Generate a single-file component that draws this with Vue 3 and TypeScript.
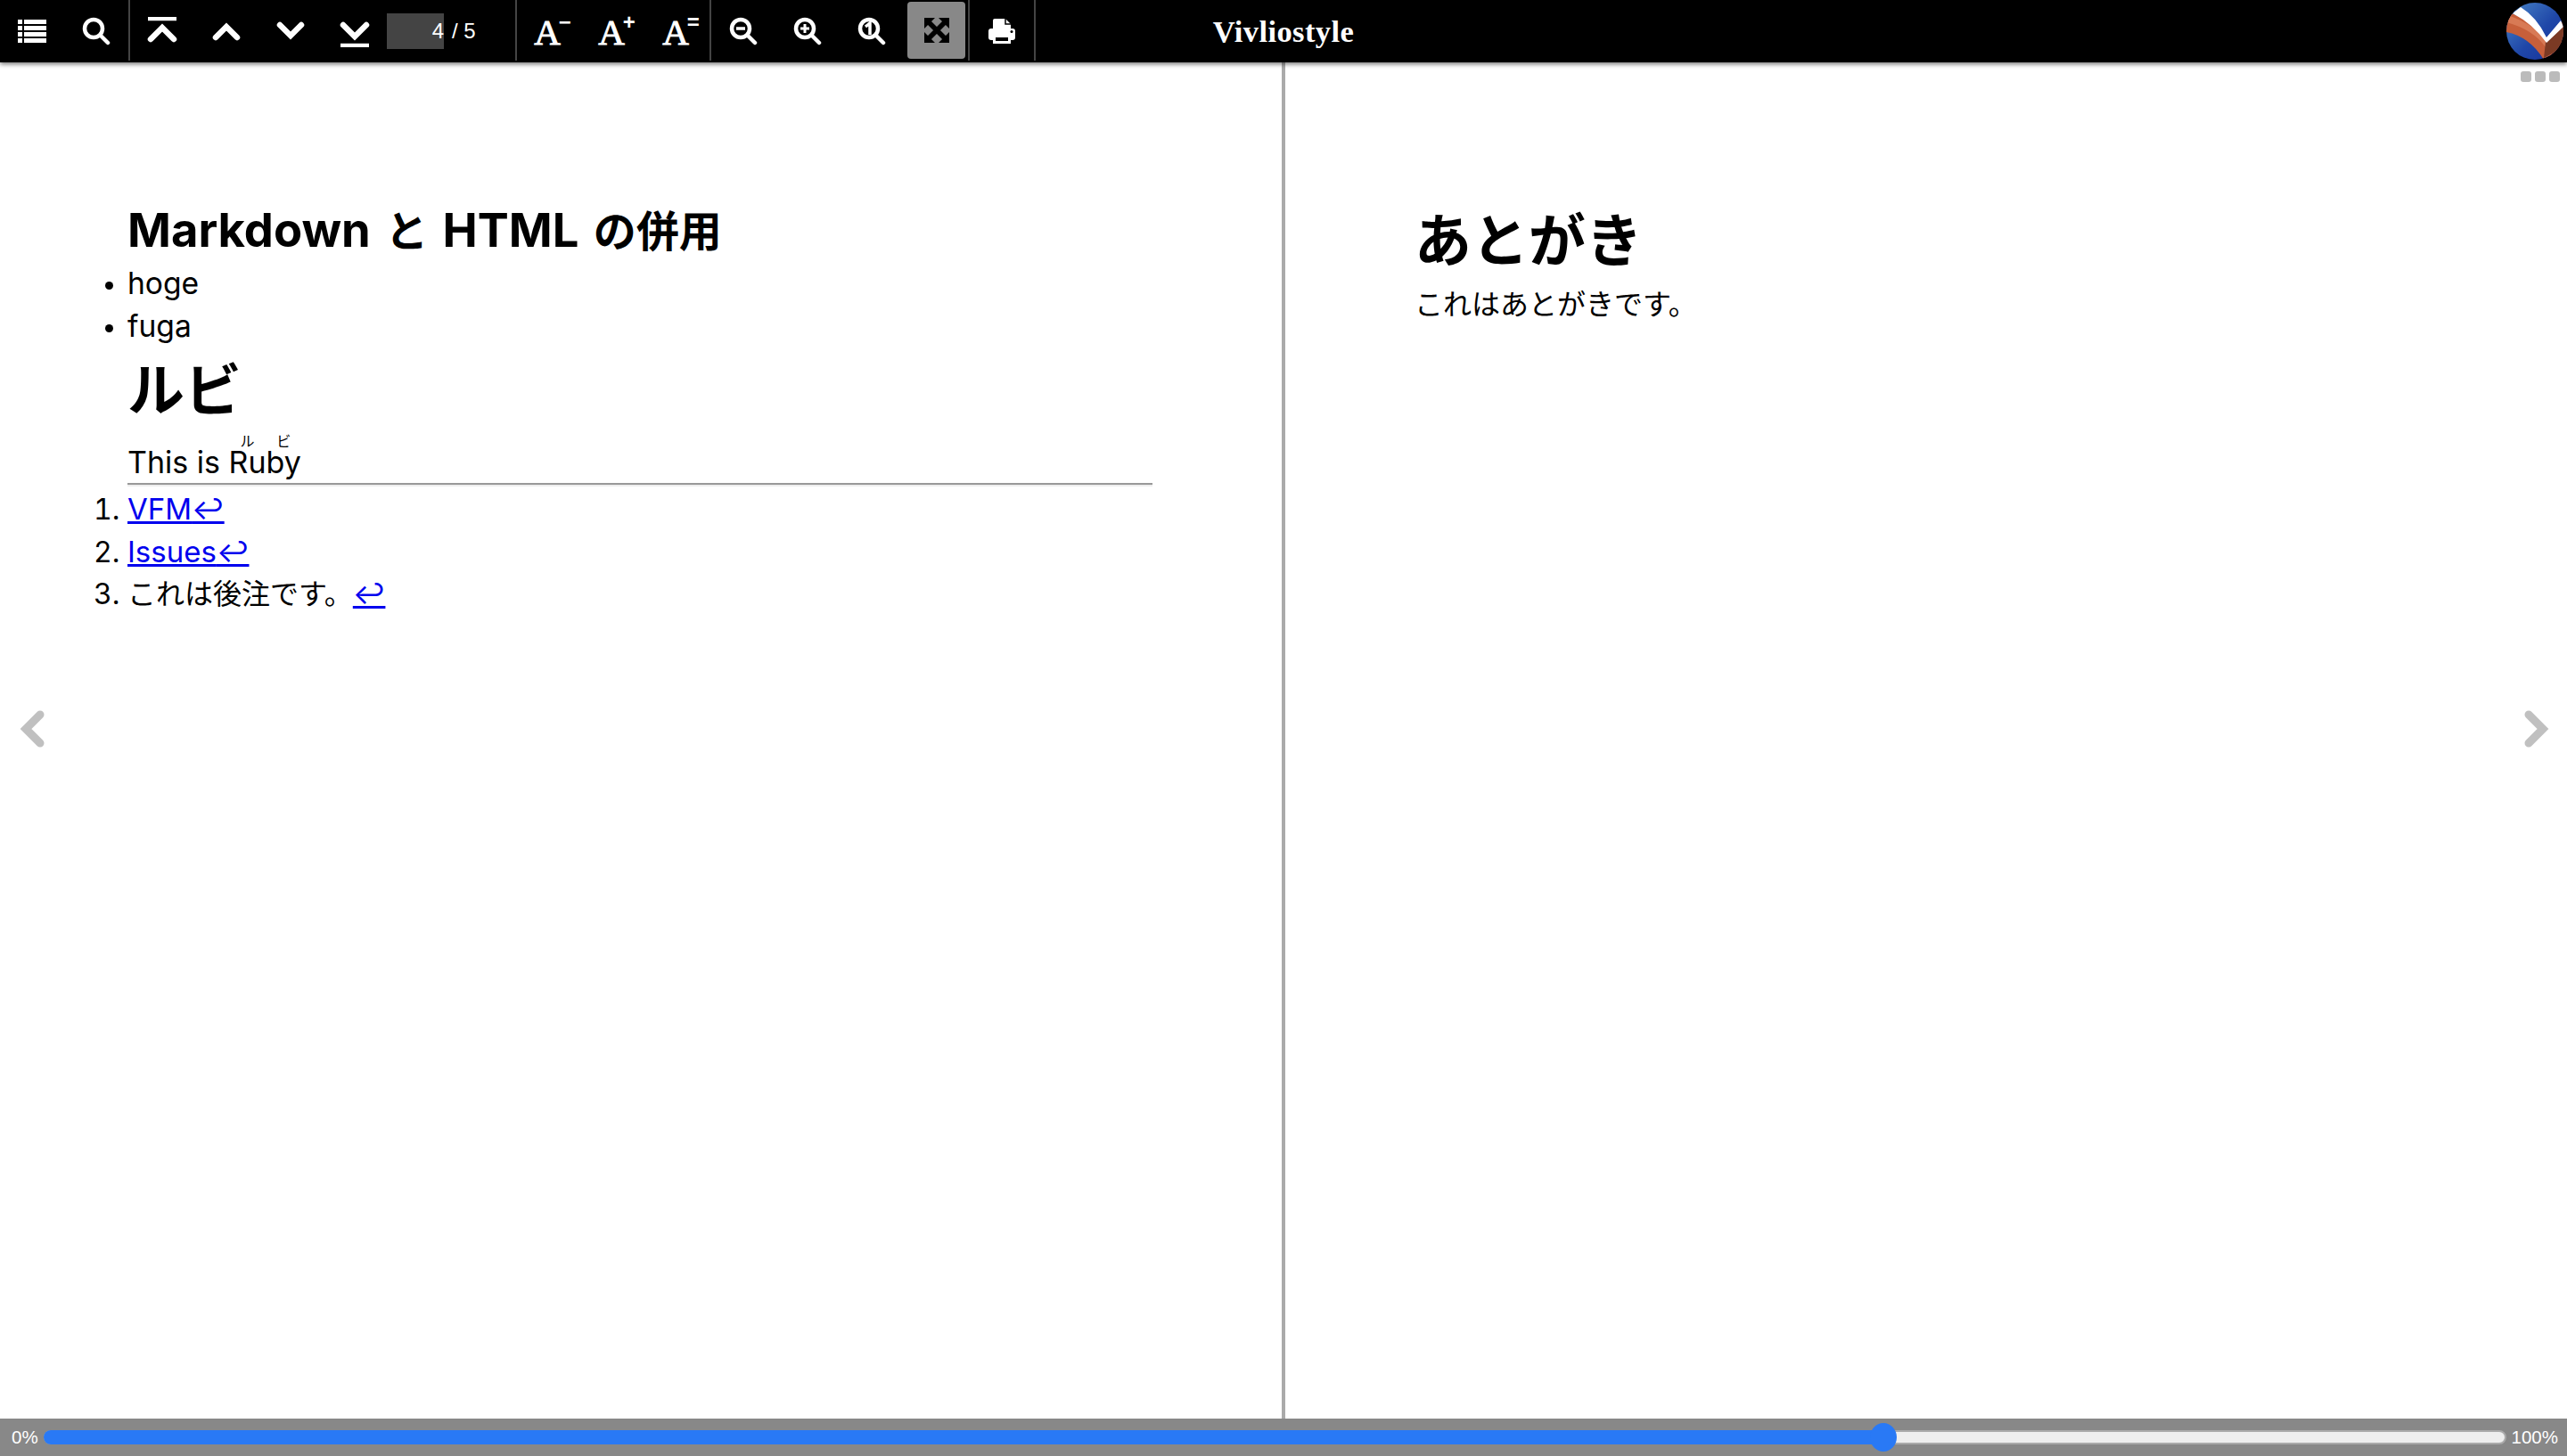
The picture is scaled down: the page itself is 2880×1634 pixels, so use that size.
<script setup lang="ts">
const sliderPercent = 74.75
</script>

<template>
  <div class="viewer">
    <header class="toolbar">
      <nav class="tools">
        <button class="tool">
          <svg width="32" height="28" viewBox="0 0 32 28" fill="#fff">
            <rect x="0" y="1" width="5" height="5" /><rect x="7" y="1" width="25" height="5" />
            <rect x="0" y="8" width="5" height="5" /><rect x="7" y="8" width="25" height="5" />
            <rect x="0" y="15" width="5" height="5" /><rect x="7" y="15" width="25" height="5" />
            <rect x="0" y="22" width="5" height="5" /><rect x="7" y="22" width="25" height="5" />
          </svg>
        </button>
        <button class="tool">
          <svg width="32" height="32" viewBox="0 0 32 32" fill="none" stroke="#fff" stroke-width="4.5" stroke-linecap="round">
            <circle cx="13" cy="13" r="10" /><path d="M21 21 L29 29" />
          </svg>
        </button>
        <i class="sep"></i>
        <button class="tool">
          <svg width="34" height="32" viewBox="0 0 34 32" fill="none" stroke="#fff">
            <path d="M1 2 H33" stroke-width="4.5" />
            <path d="M4 25 L17 12 L30 25" stroke-width="6.5" stroke-linecap="round" />
          </svg>
        </button>
        <button class="tool">
          <svg width="34" height="24" viewBox="0 0 34 24" fill="none" stroke="#fff" stroke-width="6.5" stroke-linecap="round">
            <path d="M5 19 L17 7 L29 19" />
          </svg>
        </button>
        <button class="tool">
          <svg width="34" height="24" viewBox="0 0 34 24" fill="none" stroke="#fff" stroke-width="6.5" stroke-linecap="round">
            <path d="M5 5 L17 17 L29 5" />
          </svg>
        </button>
        <button class="tool">
          <svg class="nudge-down" width="34" height="32" viewBox="0 0 34 32" fill="none" stroke="#fff">
            <path d="M4 7 L17 20 L30 7" stroke-width="6.5" stroke-linecap="round" />
            <path d="M1 30 H33" stroke-width="4.5" />
          </svg>
        </button>
        <div class="pager">
          <span class="page-input">4</span>
          <span class="page-total">/ 5</span>
        </div>
        <i class="sep"></i>
        <button class="tool font-tool"><span class="big-a">A</span><span class="font-mark">−</span></button>
        <button class="tool font-tool"><span class="big-a">A</span><span class="font-mark">+</span></button>
        <button class="tool font-tool"><span class="big-a">A</span><span class="font-mark">=</span></button>
        <i class="sep"></i>
        <button class="tool">
          <svg width="32" height="32" viewBox="0 0 32 32" fill="none" stroke="#fff" stroke-width="4.5" stroke-linecap="round">
            <circle cx="13" cy="13" r="10" /><path d="M21 21 L29 29" /><path d="M8 13 H18" stroke-width="3.5" stroke-linecap="butt" />
          </svg>
        </button>
        <button class="tool">
          <svg width="32" height="32" viewBox="0 0 32 32" fill="none" stroke="#fff" stroke-width="4.5" stroke-linecap="round">
            <circle cx="13" cy="13" r="10" /><path d="M21 21 L29 29" /><path d="M8 13 H18 M13 8 V18" stroke-width="3" stroke-linecap="butt" />
          </svg>
        </button>
        <button class="tool">
          <svg width="32" height="32" viewBox="0 0 32 32" fill="none" stroke="#fff" stroke-width="4.5" stroke-linecap="round">
            <circle cx="13" cy="13" r="10" /><path d="M21 21 L29 29" /><path d="M9 11 L14 7 V20" stroke-width="3.5" stroke-linecap="butt" />
          </svg>
        </button>
        <button class="tool tool-active">
          <svg width="28" height="28" viewBox="0 0 28 28" fill="#000" stroke="#000">
            <path d="M0 0 H12 L0 12 Z M28 0 V12 L16 0 Z M0 28 V16 L12 28 Z M28 28 H16 L28 16 Z" stroke="none" />
            <path d="M5 5 L23 23 M23 5 L5 23" stroke-width="5.5" fill="none" />
          </svg>
        </button>
        <i class="sep"></i>
        <button class="tool">
          <svg width="30" height="28" viewBox="0 0 30 28">
            <path d="M5 13 V2 Q5 0 7 0 H19 L25 6 V13 Z" fill="#fff" />
            <path d="M19 0 V6 H25" fill="none" stroke="#000" stroke-width="1.5" />
            <path d="M3 11 H27 Q30 11 30 14 V21 Q30 24 27 24 H3 Q0 24 0 21 V14 Q0 11 3 11 Z" fill="#fff" />
            <circle cx="26" cy="14.500" r="1.500" fill="#000" />
            <rect x="6.500" y="19.500" width="17" height="7" fill="#000" stroke="#fff" stroke-width="3" />
          </svg>
        </button>
        <i class="sep"></i>
      </nav>
      <h1 class="brand">Vivliostyle</h1>
      <div class="logo-slot">
        <svg class="logo" width="64" height="64" viewBox="0 0 64 64">
          <defs>
            <clipPath id="logo-clip"><circle cx="32" cy="32" r="32" /></clipPath>
            <linearGradient id="logo-blue" x1="0" y1="0" x2="1" y2="1">
              <stop offset="0" stop-color="#4a86c8" /><stop offset="0.55" stop-color="#1f47a8" /><stop offset="1" stop-color="#16309a" />
            </linearGradient>
          </defs>
          <g clip-path="url(#logo-clip)">
            <rect width="64" height="64" fill="url(#logo-blue)" />
            <path d="M0 33 Q26 38 42 64 L64 64 V20 L44 40 Q28 20 6 12 L0 18 Z" fill="#c75f3a" />
            <path d="M4 15 Q30 24 44 42 V50 Q30 30 0 22 Z" fill="#d87a55" />
            <path d="M44 44 L64 26 V50 L42 62 Z" fill="#7b3a24" />
            <path d="M7 12 L16 5 Q34 16 45 39 L61 20 L64 27 L45 45 Q30 24 7 12 Z" fill="#fff" />
          </g>
        </svg>
      </div>
    </header>

    <main class="spread">
      <section class="page page-left">
        <h2 class="sub-title"><span class="lat-big">Markdown</span> と <span class="lat-big">HTML</span> の併用</h2>
        <ul class="plain-list">
          <li class="lat-line">hoge</li>
          <li class="lat-line">fuga</li>
        </ul>
        <h2 class="main-title">ルビ</h2>
        <p class="ruby-line">This is <ruby>Ru<rt>ル</rt></ruby><ruby>by<rt>ビ</rt></ruby></p>
        <hr class="rule" />
        <ol class="notes">
          <li><a href="#"><span class="lat">VFM</span>↩</a></li>
          <li><a href="#"><span class="lat">Issues</span>↩</a></li>
          <li>これは後注です。<a href="#">↩</a></li>
        </ol>
      </section>
      <section class="page page-right">
        <h2 class="main-title">あとがき</h2>
        <p class="after-text">これはあとがきです。</p>
      </section>

      <svg class="turn turn-prev" width="30" height="42" viewBox="0 0 30 42" fill="none" stroke="#c0c0c0" stroke-width="9" stroke-linecap="round">
        <path d="M24 5 L8 21 L24 37" />
      </svg>
      <svg class="turn turn-next" width="30" height="42" viewBox="0 0 30 42" fill="none" stroke="#c0c0c0" stroke-width="9" stroke-linecap="round">
        <path d="M6 5 L22 21 L6 37" />
      </svg>
      <div class="panel-handle"><i></i><i></i><i></i></div>
    </main>

    <footer class="progress">
      <span class="percent">0%</span>
      <div class="track">
        <div class="fill" :style="{ width: sliderPercent + '%' }"></div>
        <div class="thumb" :style="{ left: sliderPercent + '%' }"></div>
      </div>
      <span class="percent">100%</span>
    </footer>
  </div>
</template>

<style>
html,
body {
  margin: 0;
  background: #fff;
}
</style>

<style scoped>
.viewer {
  width: 2880px;
  height: 1634px;
  display: flex;
  flex-direction: column;
  font-family: Inter, "Noto Sans CJK JP", sans-serif;
  color: #000;
  overflow: hidden;
}

.toolbar {
  height: 70px;
  flex: none;
  background: #000;
  display: grid;
  grid-template-columns: 1fr auto 1fr;
  align-items: center;
  box-shadow: 0 2px 5px rgba(0, 0, 0, 0.55);
  position: relative;
  z-index: 2;
}

.tools {
  display: flex;
  align-items: center;
  height: 70px;
}

.tool {
  width: 72px;
  height: 64px;
  padding: 0;
  border: 0;
  background: none;
  display: flex;
  align-items: center;
  justify-content: center;
  flex: none;
}

.tool-active {
  width: 65px;
  margin: 0 3px 2px 4px;
  background: #888;
  border-radius: 4px;
}

.nudge-down {
  margin-top: 4px;
}

.sep {
  display: block;
  width: 2px;
  height: 68px;
  margin: 0 0 2px;
  background: #444;
  flex: none;
}

.pager {
  width: 144px;
  display: flex;
  align-items: center;
  color: #fff;
  font-family: "Liberation Sans", sans-serif;
  font-size: 24px;
  flex: none;
}

.page-input {
  width: 64px;
  height: 40px;
  line-height: 40px;
  background: #444;
  text-align: right;
}

.page-total {
  margin-left: 9px;
}

.font-tool {
  color: #fff;
  align-items: flex-start;
  padding-left: 8px;
  box-sizing: border-box;
}

.big-a {
  font-family: "Liberation Serif", serif;
  font-size: 41px;
  line-height: 66px;
  -webkit-text-stroke: 1px #fff;
}

.font-mark {
  font-family: "Liberation Sans", sans-serif;
  font-size: 24px;
  font-weight: bold;
  line-height: 44px;
  margin-left: -2px;
}

.brand {
  margin: 0;
  color: #fff;
  font-family: "Liberation Serif", serif;
  font-size: 34.5px;
  font-weight: bold;
  line-height: 70px;
  letter-spacing: 0.4px;
}

.logo-slot {
  display: flex;
  justify-content: flex-end;
  padding-right: 4px;
}

.logo {
  display: block;
}

.spread {
  flex: 1;
  position: relative;
  display: grid;
  grid-template-columns: 1fr 1fr;
  min-height: 0;
}

.page {
  box-sizing: border-box;
}

.page-left {
  border-right: 4px solid #aaa;
  padding: 158px 145px 0 143px;
  margin-right: -2px;
}

.page-right {
  padding: 152px 0 0 147px;
}

.sub-title {
  margin: 0 0 4px;
  font-size: 48px;
  line-height: 60px;
  font-weight: 700;
  word-spacing: 5px;
}

.lat-big {
  font-size: 52.5px;
}

.lat {
  font-size: 33px;
}

.plain-list,
.notes {
  margin: 0;
  padding: 0;
  list-style-position: outside;
}

.plain-list li,
.notes li {
  font-size: 32px;
  line-height: 48px;
  height: 48px;
}

.plain-list .lat-line {
  font-size: 33.6px;
}

.plain-list li::marker {
  font-size: 28px;
}

.main-title {
  margin: 0;
  font-size: 64px;
  line-height: 96px;
  font-weight: bold;
}

.ruby-line {
  margin: 0;
  font-size: 34px;
  line-height: 48px;
}

.ruby-line rt {
  font-size: 16px;
  line-height: 16px;
}

.rule {
  height: 2px;
  margin: -1px 0 3px;
  border: 0;
  background: #999;
  box-shadow: 0 2px 0 #eee;
}

.notes a {
  color: #0000ee;
}

.after-text {
  margin: 0;
  font-size: 32px;
  line-height: 48px;
}

.turn {
  position: absolute;
  top: 727px;
}

.turn-prev {
  left: 21px;
}

.turn-next {
  right: 19px;
}

.panel-handle {
  position: absolute;
  top: 10px;
  right: 8px;
  display: flex;
  gap: 4px;
}

.panel-handle i {
  width: 12px;
  height: 12px;
  border-radius: 3px;
  background: #bbb;
}

.progress {
  height: 42px;
  flex: none;
  background: #888;
  display: flex;
  align-items: center;
  padding: 0 10px 0 13px;
  gap: 6px;
  color: #fff;
  font-family: "Liberation Sans", sans-serif;
}

.percent {
  font-size: 20.5px;
  flex: none;
}

.track {
  flex: 1;
  height: 16px;
  position: relative;
  box-sizing: border-box;
  background: #eee;
  border: 2px solid #aaa;
  border-radius: 8px;
}

.fill {
  position: absolute;
  left: -2px;
  top: -2px;
  bottom: -2px;
  background: #2979f5;
  border-radius: 8px 0 0 8px;
}

.thumb {
  position: absolute;
  top: 50%;
  width: 30px;
  height: 32px;
  border-radius: 50%;
  background: #2979f5;
  transform: translate(-50%, -50%);
}
</style>
